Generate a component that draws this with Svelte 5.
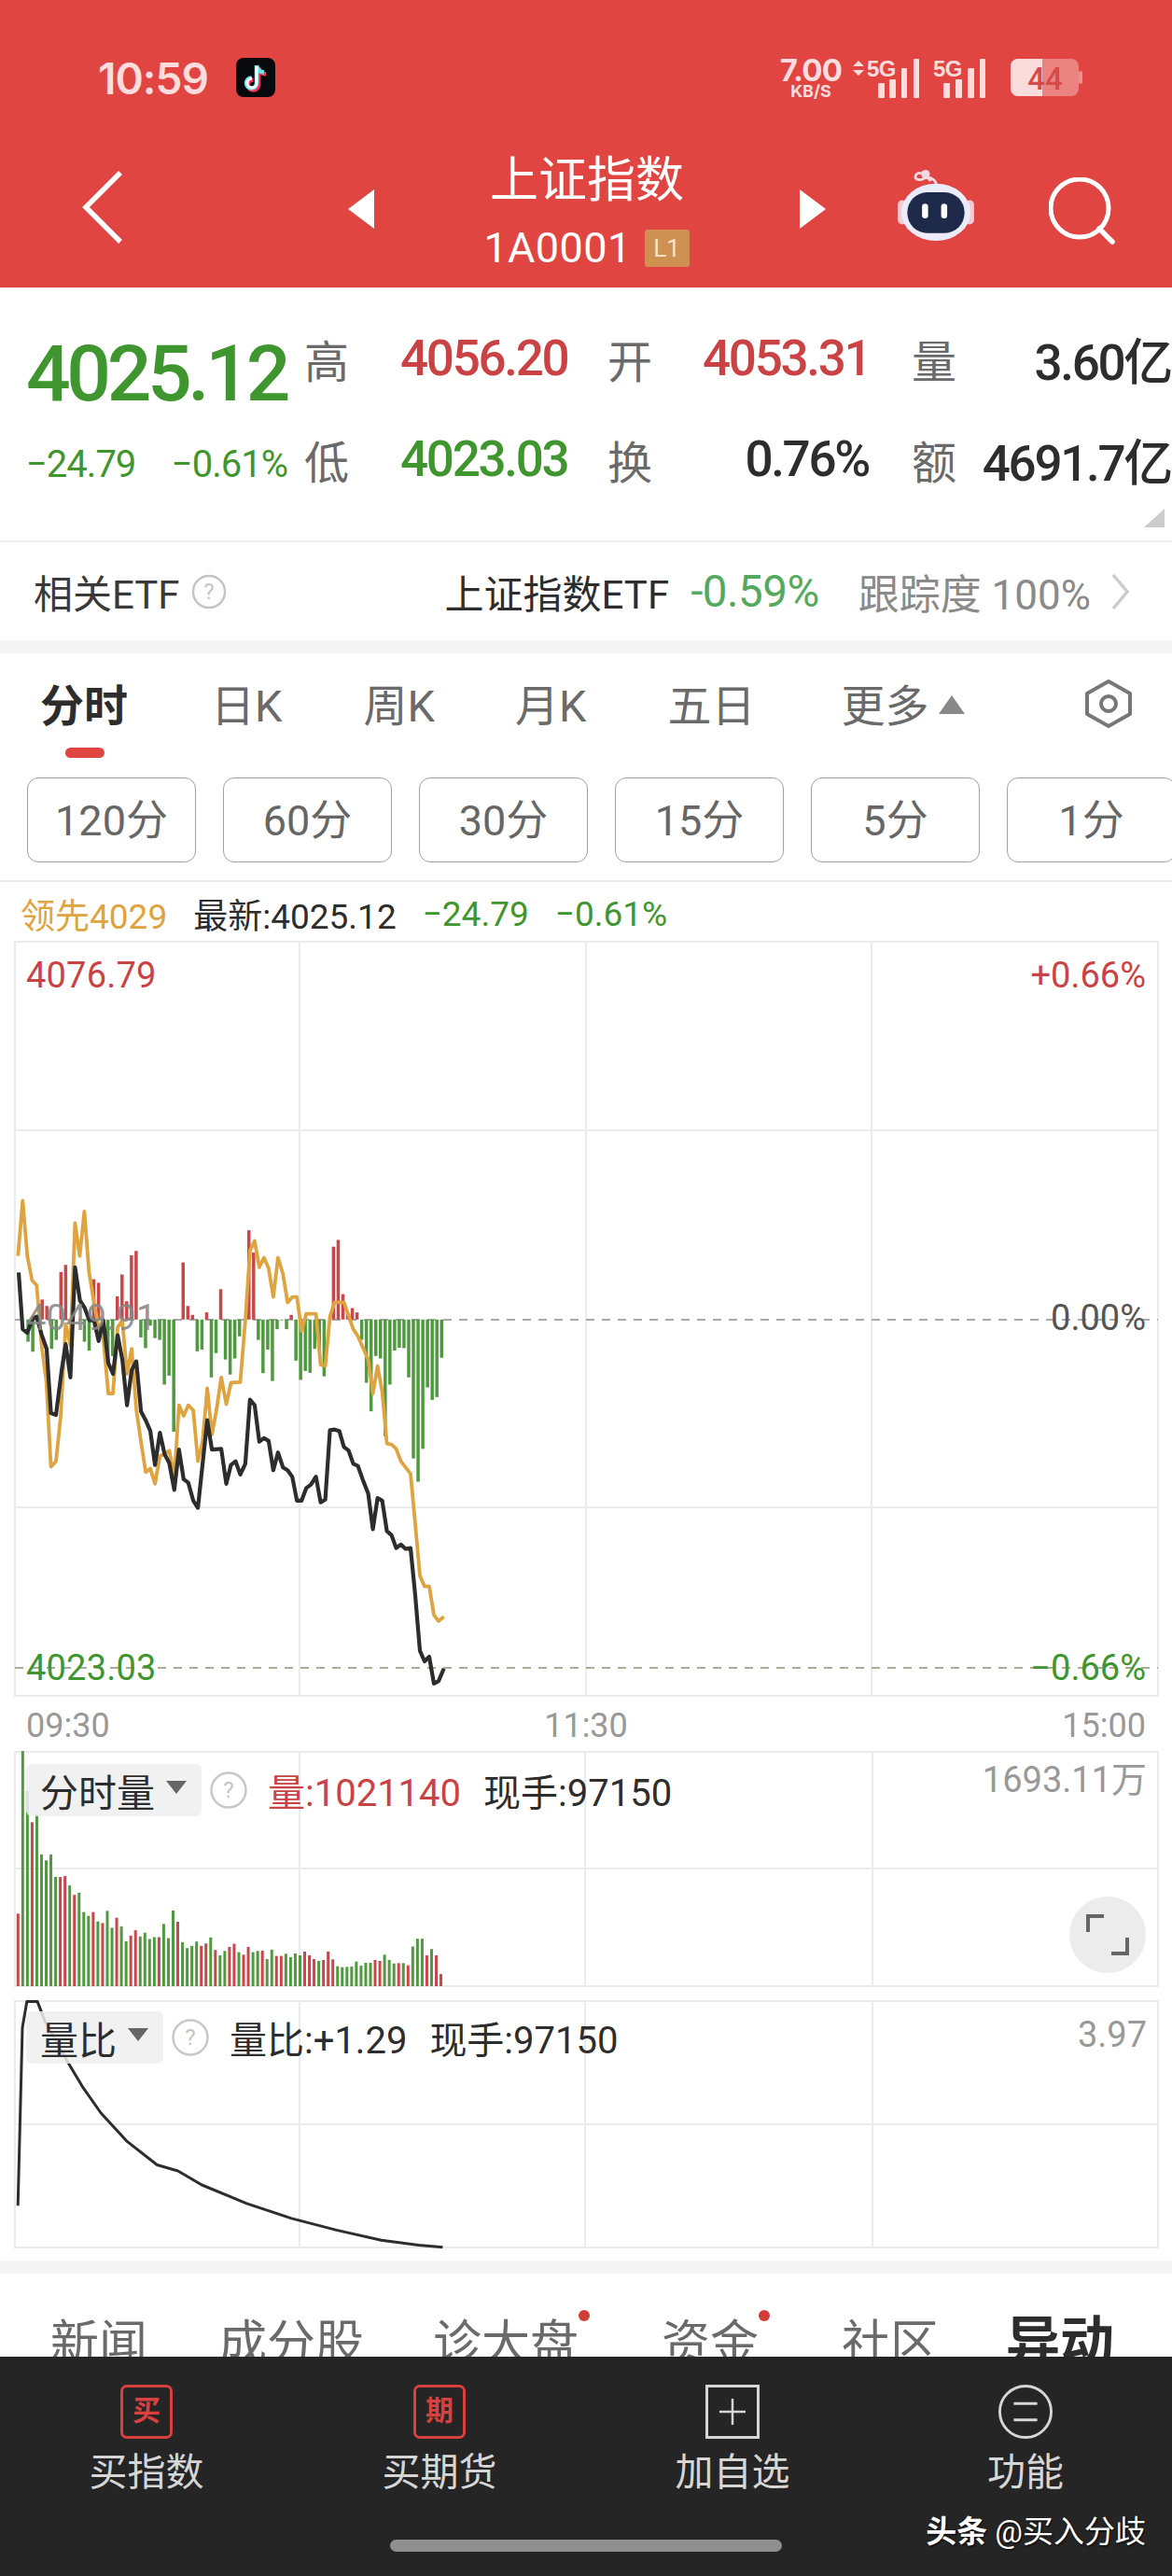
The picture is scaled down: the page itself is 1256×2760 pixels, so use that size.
<script>
  const RED = '#c8474a', GREEN = '#4f9a3f';
  const pts = (a) => { let s = []; for (let i = 0; i < a.length; i += 2) s.push(`${(a[i] / 2.8).toFixed(1)},${(1250 + a[i + 1] / 2.613).toFixed(1)}`); return s.join(' '); };
  const black = pts([56,296,68,455,82,465,98,425,110,420,125,470,140,510,153,690,168,695,185,570,197,497,211,590,225,282,240,375,254,395,268,430,282,430,296,488,310,430,325,550,339,580,353,472,367,540,381,668,395,570,409,545,423,685,437,710,451,740,465,835,480,745,494,805,508,830,523,905,537,792,551,875,565,885,580,935,594,955,622,710,636,792,664,790,679,888,693,835,707,825,721,862,736,832,750,652,764,668,778,770,792,760,806,768,820,850,834,800,849,842,863,850,877,868,891,935,905,935,919,900,933,890,948,868,962,940,976,932,990,738,1004,736,1018,740,1032,785,1046,795,1060,832,1074,838,1088,875,1105,915,1119,1015,1133,928,1147,935,1161,1020,1175,1032,1189,1068,1203,1058,1217,1070,1232,1068,1246,1200,1260,1355,1274,1385,1288,1372,1302,1447,1316,1440,1332,1405]);
  const orange = pts([54,250,68,95,82,250,96,318,110,332,125,500,139,600,153,840,168,825,182,700,197,440,211,500,225,158,239,250,253,125,267,295,282,380,296,450,310,480,325,635,339,635,353,450,367,430,381,580,395,510,409,680,423,770,437,855,451,845,465,888,480,810,494,805,508,795,523,870,537,668,551,698,565,668,580,682,594,825,608,770,622,620,636,750,650,680,664,590,679,665,693,605,721,603,736,430,750,235,764,208,778,282,792,255,806,285,820,365,834,255,849,300,863,380,877,365,891,365,905,460,919,412,948,412,962,555,976,558,990,420,1004,380,1032,380,1060,455,1074,475,1105,540,1119,635,1133,558,1147,630,1161,775,1175,778,1189,790,1203,825,1232,860,1246,1000,1260,1145,1274,1175,1288,1175,1302,1255,1316,1272,1332,1260]);
  const mainTops = [0,0,490,518,0,372,390,510,485,295,275,0,0,0,490,515,315,325,480,550,530,363,302,377,248,236,478,508,445,480,485,610,585,742,0,268,390,415,517,512,408,590,522,343,540,582,537,475,0,178,240,485,578,512,600,455,430,455,415,543,597,572,577,510,515,587,0,224,205,357,410,396,408,485,605,685,530,537,755,610,515,507,508,590,817,882,790,618,653,645,535];
  const mainBars = mainTops.map((t, i) => ({ x: 20 + 5.036 * i - 1.75, t })).filter((b) => b.t).map((b) => {
    const y = 1250 + b.t / 2.613, base = 1250 + 428 / 2.613;
    return { x: b.x, y: Math.min(y, base), h: Math.abs(y - base), c: y < base ? RED : GREEN };
  });
  const vol = '597r 78g 205g 305r 280g 408g 427g 408g 480g 480r 477r 507g 537r 530g 592g 604g 592r 622g 627r 588g 642g 610r 638g 685g 667r 650r 670g 658g 678g 672g 672r 630g 675g 587g 623r 688g 707g 700g 686g 700r 692r 673g 713r 730g 716g 703r 693r 720g 728r 703r 720g 716g 715r 742g 712g 732r 732r 725g 736g 724g 730g 718r 730r 742r 748g 745r 718r 743r 765g 768g 767g 766g 750g 763g 754g 754g 745r 748r 728g 745g 756g 755r 755g 762r 702g 677g 677g 730r 710g 730r 790r'.split(' ');
  const volBars = vol.map((v, i) => {
    const y = 1850 + parseInt(v) / 2.98;
    return { x: 17.8 + 5.036 * i, y, h: 2128 - y, c: v.endsWith('r') ? RED : GREEN };
  });
  const ratio = [[24,1432],[30,900],[36,822],[50,822],[60,880],[90,1000],[110,1075],[135,1155],[170,1240],[210,1310],[238,1328],[270,1370],[330,1425],[390,1470],[450,1505],[510,1535],[560,1550],[592,1556]]
    .map(([x, y]) => `${(x / 1.248).toFixed(1)},${(1850 + y / 2.79).toFixed(1)}`).join(' ');
  const periods = ['120分', '60分', '30分', '15分', '5分', '1分'];
  const actions = [
    { label: '买指数', kind: 'buy', glyph: '买' },
    { label: '买期货', kind: 'buy', glyph: '期' },
    { label: '加自选', kind: 'plus' },
    { label: '功能', kind: 'menu' }
  ];
</script>

<div class="page">
  <header class="head">
    <div class="status">
      <span class="clock">10:59</span>
      <svg class="tt" width="42" height="42" viewBox="0 0 42 42">
        <rect width="42" height="42" rx="8" fill="#08090c"/>
        <path d="M23 9v19a5.500 5.500 0 1 1-5.500-5.500M23 9c.5 4.500 3.500 7 8 7.500" fill="none" stroke="#ff2d55" stroke-width="4.500" transform="translate(1 1)"/>
        <path d="M23 9v19a5.500 5.500 0 1 1-5.500-5.500M23 9c.5 4.500 3.500 7 8 7.500" fill="none" stroke="#5fe6ea" stroke-width="4.500" transform="translate(-1 -1)"/>
        <path d="M22 9v18a5 5 0 1 1-5-5" fill="none" stroke="#fff" stroke-width="3"/>
      </svg>
      <span class="grow"></span>
      <span class="speed"><b>7.00</b><i>KB/S</i></span>
      <svg class="sig" width="80" height="44" viewBox="0 0 80 44">
        <path d="M6 0l6 6H0zM6 16L0 10h12z" fill="#fcdcdc" transform="translate(0 2)"/>
        <text x="15" y="19" class="fiveg">5G</text>
        <rect x="27" y="26" width="7" height="16" rx="1"/><rect x="39" y="22" width="7" height="20" rx="1"/><rect x="52" y="10" width="6" height="32" rx="1"/><rect x="65" y="0" width="6" height="42" rx="1"/>
      </svg>
      <svg class="sig two" width="62" height="44" viewBox="0 0 62 44">
        <text x="0" y="19" class="fiveg">5G</text>
        <rect x="11" y="26" width="7" height="16" rx="1"/><rect x="24" y="22" width="7" height="20" rx="1"/><rect x="37" y="10" width="7" height="32" rx="1"/><rect x="50" y="0" width="6" height="42" rx="1"/>
      </svg>
      <svg class="batt" width="78" height="42" viewBox="0 0 78 42">
        <rect x="0" y="1" width="73" height="40" rx="8" fill="#fbdcdc" fill-opacity=".42"/>
        <path d="M8 1h26v40H8a8 8 0 0 1-8-8V9a8 8 0 0 1 8-8z" fill="#fbdcdc"/>
        <rect x="73" y="14" width="4" height="14" rx="2" fill="#fbdcdc" fill-opacity=".5"/>
        <text x="37" y="34" class="bnum">44</text>
      </svg>
    </div>
    <nav class="bar">
      <svg class="back" width="44" height="78" viewBox="0 0 44 78"><path d="M41 2L4 39l37 37" fill="none" stroke="#fff" stroke-width="5.500"/></svg>
      <svg class="arr-l" width="28" height="42" viewBox="0 0 28 42"><path d="M28 0v42L0 21z" fill="#fff"/></svg>
      <div class="title">
        <div class="name">上证指数</div>
        <div class="code">1A0001<span class="lv">L1</span></div>
      </div>
      <svg class="arr-r" width="28" height="42" viewBox="0 0 28 42"><path d="M0 0v42l28-21z" fill="#fff"/></svg>
      <svg class="bot" width="84" height="78" viewBox="0 0 88 84">
        <path d="M38 14c-6-8-14-12-17-7s4 7 9 4 13 0 15 8" fill="none" stroke="#f4d9e4" stroke-width="3"/>
        <circle cx="32" cy="6" r="5" fill="#f4d9e4"/>
        <rect x="0" y="36" width="10" height="28" rx="5" fill="#f5c9d4"/>
        <rect x="78" y="36" width="10" height="28" rx="5" fill="#f5c9d4"/>
        <ellipse cx="44" cy="50" rx="40" ry="33" fill="#ecebfa"/>
        <rect x="11" y="27" width="66" height="47" rx="23" fill="#1e2a4a"/>
        <rect x="28" y="40" width="7" height="17" rx="3.500" fill="#fff"/>
        <rect x="50" y="40" width="7" height="17" rx="3.500" fill="#fff"/>
      </svg>
      <svg class="search" width="72" height="72" viewBox="0 0 72 72"><circle cx="33" cy="33" r="31" fill="none" stroke="#fff" stroke-width="5"/><path d="M54 55l14 14" stroke="#fff" stroke-width="5.500" stroke-linecap="round"/></svg>
    </nav>
  </header>

  <section class="stats">
    <div class="left">
      <div class="price">4025.12</div>
      <div class="chg"><span>−24.79</span><span>−0.61%</span></div>
    </div>
    <div class="grid">
      <span class="lab">高</span><span class="val red">4056.20</span>
      <span class="lab">开</span><span class="val red second">4053.31</span>
      <span class="lab">量</span><span class="val dark third">3.60亿</span>
      <span class="lab">低</span><span class="val green">4023.03</span>
      <span class="lab">换</span><span class="val dark second">0.76%</span>
      <span class="lab">额</span><span class="val dark third">4691.7亿</span>
    </div>
    <svg class="corner" width="22" height="20" viewBox="0 0 22 20"><path d="M22 0v20H0z" fill="#ccc"/></svg>
  </section>

  <section class="etf">
    <span class="etf-name">相关ETF</span>
    <svg class="q" width="38" height="38" viewBox="0 0 38 38"><circle cx="19" cy="19" r="17" fill="none" stroke="#c4c4c4" stroke-width="2.500"/><text x="19" y="27" class="qm">?</text></svg>
    <span class="grow"></span>
    <span class="etf-t">上证指数ETF</span>
    <span class="etf-p">-0.59%</span>
    <span class="etf-d">跟踪度 100%</span>
    <svg width="22" height="40" viewBox="0 0 22 40"><path d="M3 2l15 18L3 38" fill="none" stroke="#ccc" stroke-width="3.500"/></svg>
  </section>

  <div class="band"></div>

  <section class="tabs">
    <span class="tab on">分时</span>
    <span class="tab t1">日K</span>
    <span class="tab t2">周K</span>
    <span class="tab t3">月K</span>
    <span class="tab t4">五日</span>
    <span class="tab t5">更多</span>
    <svg class="more" width="28" height="20" viewBox="0 0 28 20"><path d="M14 0l14 20H0z" fill="#888"/></svg>
    <span class="grow"></span>
    <svg width="56" height="54" viewBox="0 0 56 54"><path d="M28 3l23 13v22L28 51 5 38V16z" fill="none" stroke="#777" stroke-width="4" stroke-linejoin="round"/><circle cx="28" cy="27" r="8" fill="none" stroke="#777" stroke-width="4"/></svg>
  </section>

  <section class="periods">
    {#each periods as p}<span class="pd">{p}</span>{/each}
  </section>

  <section class="legend">
    <span class="gold">领先4029</span>
    <span class="dark">最新:4025.12</span>
    <span class="green">−24.79</span>
    <span class="green">−0.61%</span>
  </section>

  <section class="chart main">
    <svg class="plot" width="1256" height="810" viewBox="0 1008 1256 810">
      <g class="gl">
        <rect x="16" y="1009" width="1225" height="808"/>
        <path d="M321 1009v808M628 1009v808M934 1009v808M16 1211h1225M16 1615h1225"/>
      </g>
      <path d="M16 1414h1225" stroke="#aaa" stroke-width="2" stroke-dasharray="9 8"/>
      <path d="M16 1787h1225" stroke="#a9ad93" stroke-width="2" stroke-dasharray="9 8"/>
      {#each mainBars as b}<rect x={b.x} y={b.y} width="3.500" height={b.h} fill={b.c}/>{/each}
      <polyline points={orange} fill="none" stroke="#dfa33f" stroke-width="3.800" stroke-linejoin="round"/>
      <polyline points={black} fill="none" stroke="#2d2d2d" stroke-width="4.200" stroke-linejoin="round"/>
    </svg>
    <span class="ov tl red">4076.79</span>
    <span class="ov tr red">+0.66%</span>
    <span class="ov ml">4049.91</span>
    <span class="ov mr">0.00%</span>
    <span class="ov bl green">4023.03</span>
    <span class="ov br green">−0.66%</span>
  </section>

  <section class="times"><span>09:30</span><span>11:30</span><span>15:00</span></section>

  <section class="chart vol">
    <svg class="plot" width="1256" height="255" viewBox="0 1875 1256 255">
      <g class="gl">
        <rect x="16" y="1877" width="1225" height="251"/>
        <path d="M321 1877v251M627 1877v251M935 1877v251M16 2002h1225"/>
      </g>
      {#each volBars as b}<rect x={b.x} y={b.y} width="3" height={b.h} fill={b.c}/>{/each}
    </svg>
    <div class="ind">
      <span class="pill">分时量<i class="tri"></i></span>
      <svg class="q" width="40" height="40" viewBox="0 0 40 40"><circle cx="20" cy="20" r="18.500" fill="none" stroke="#c8c8c8" stroke-width="2.500"/><text x="20" y="28" class="qm">?</text></svg>
      <span class="red">量:1021140</span>
      <span class="dark">现手:97150</span>
    </div>
    <span class="ov right-val">1693.11万</span>
    <span class="ov expand">
      <svg width="46" height="44" viewBox="0 0 46 44"><path d="M19 2H2v17M27 42h17V25" fill="none" stroke="#666" stroke-width="4"/></svg>
    </span>
  </section>

  <section class="chart ratio">
    <svg class="plot" width="1256" height="268" viewBox="0 2142 1256 268">
      <g class="gl">
        <rect x="16" y="2144" width="1225" height="264"/>
        <path d="M321 2144v264M627 2144v264M935 2144v264M16 2276h1225"/>
      </g>
      <polyline points={ratio} fill="none" stroke="#2d2d2d" stroke-width="3" stroke-linejoin="round"/>
    </svg>
    <div class="ind r-ind">
      <span class="pill">量比<i class="tri"></i></span>
      <svg class="q" width="40" height="40" viewBox="0 0 40 40"><circle cx="20" cy="20" r="18.500" fill="none" stroke="#c8c8c8" stroke-width="2.500"/><text x="20" y="28" class="qm">?</text></svg>
      <span>量比:+1.29</span>
      <span class="dark">现手:97150</span>
    </div>
    <span class="ov right-val r2">3.97</span>
  </section>

  <div class="band last"></div>

  <section class="news">
    <span class="n n1">新闻</span>
    <span class="n n2">成分股</span>
    <span class="n n3 dot">诊大盘</span>
    <span class="n n4 dot">资金</span>
    <span class="n n5">社区</span>
    <span class="n n6">异动</span>
  </section>

  <footer class="foot">
    {#each actions as a}
      <div class="act">
        {#if a.kind === 'buy'}
          <span class="ibox">{a.glyph}</span>
        {:else if a.kind === 'plus'}
          <svg width="58" height="58" viewBox="0 0 58 58"><rect x="1.500" y="1.500" width="55" height="55" fill="none" stroke="#d6d6d6" stroke-width="3"/><path d="M29 15v28M15 29h28" stroke="#d6d6d6" stroke-width="2.500"/></svg>
        {:else}
          <svg width="60" height="60" viewBox="0 0 60 60"><circle cx="30" cy="30" r="28.500" fill="none" stroke="#d6d6d6" stroke-width="3"/><path d="M17 21h26M17 39h26" stroke="#d6d6d6" stroke-width="3"/></svg>
        {/if}
        <span class="alabel">{a.label}</span>
      </div>
    {/each}
    <span class="mark"><b>头条</b> @买入分歧</span>
    <span class="home"></span>
  </footer>
</div>

<style>
  :global(body) { margin: 0; background: #fff; }
  .page { width: 1256px; height: 2760px; overflow: hidden; font-family: Roboto, "Noto Sans CJK SC", sans-serif; color: #2d2d2d; background: #fff; }
  .grow { flex: 1; }
  .red { color: #cb4244; }
  .green { color: #3f962f; }
  .dark { color: #2d2d2d; }
  .gold { color: #dfa33f; }

  .head { height: 308px; background: #e04541; }
  .status { height: 130px; box-sizing: border-box; padding: 62px 95px 0 105px; display: flex; align-items: flex-start; color: #fcdcdc; }
  .clock { font-family: Inter, sans-serif; font-weight: 600; font-size: 46px; line-height: 44px; letter-spacing: -1px; width: 148px; }
  .tt { flex: none; }
  .speed { display: flex; flex-direction: column; align-items: center; width: 70px; margin-right: 10px; font-family: Inter, sans-serif; }
  .speed b { font-size: 33px; line-height: 27px; font-weight: 700; letter-spacing: -.8px; }
  .speed i { font-style: normal; font-size: 18px; line-height: 17px; font-weight: 700; }
  .sig rect { fill: #fcdcdc; }
  .fiveg { font: 700 24px "Liberation Sans", sans-serif; fill: #fcdcdc; letter-spacing: -.5px; }
  .sig { margin-top: 1px; }
  .sig.two { margin-left: 6px; margin-right: 21px; }
  .bnum { font: 500 33px Roboto, sans-serif; fill: #d64a4a; text-anchor: middle; }

  .bar { height: 178px; display: flex; align-items: center; padding-bottom: 12px; box-sizing: border-box; }
  .back { margin-left: 88px; margin-top: 17px; }
  .arr-l { margin-left: 241px; margin-top: 22px; }
  .arr-r { margin-top: 22px; }
  .title { width: 456px; display: flex; flex-direction: column; align-items: center; color: #fff; margin-top: 27px; }
  .name { font-size: 52px; line-height: 70px; }
  .code { display: flex; align-items: center; font-size: 45px; line-height: 56px; margin-top: 9px; margin-left: -1px; letter-spacing: .4px; }
  .lv { margin-left: 14px; width: 48px; height: 40px; background: #cf9152; color: #f8e3c8; font-size: 26px; line-height: 40px; text-align: center; border-radius: 3px; letter-spacing: 0; }
  .bot { margin-left: 76px; margin-top: 14px; }
  .search { margin-left: 79px; margin-top: 25px; }

  .stats { position: relative; height: 273px; box-sizing: border-box; border-bottom: 2px solid #eee; padding: 23px 0 0 28px; display: flex; }
  .left { width: 298px; flex: none; }
  .price { font-size: 84px; line-height: 84px; font-weight: 500; color: #3f962f; letter-spacing: -4.400px; margin-top: 28px; }
  .chg { display: flex; justify-content: space-between; width: 280px; margin-top: 30px; font-size: 40px; line-height: 50px; color: #3f962f; letter-spacing: -1px; }
  .grid { display: grid; grid-template-columns: 103px 222px 102px 224px 51px 227px; grid-template-rows: 106px 110px; align-items: center; }
  .lab { font-size: 48px; color: #6a6a6a; }
  .val { font-size: 53px; letter-spacing: -2.300px; font-weight: 500; padding-right: 46px; text-align: right; white-space: nowrap; }
  .val.second { padding-right: 46px; }
  .val.third { padding-right: 0; }
  .corner { position: absolute; right: 8px; bottom: 14px; }

  .etf { height: 105px; display: flex; align-items: center; padding: 0 44px 0 36px; font-size: 42px; box-sizing: border-box; }
  .etf .q { margin-left: 12px; }
  .etf-name { color: #3a3a3a; }
  .etf-t { color: #2d2d2d; }
  .etf-p { color: #55a95f; margin-left: 23px; font-size: 47.500px; letter-spacing: -.5px; }
  .etf-d { color: #8a8a8a; margin-left: 42px; margin-right: 21px; font-size: 44px; }
  .qm { font: 24px Roboto, sans-serif; fill: #c4c4c4; text-anchor: middle; }

  .band { height: 14px; background: #f4f4f4; }
  .band.last { margin-top: 12px; }

  .tabs { height: 120px; box-sizing: border-box; padding: 25px 40px 0 43px; display: flex; align-items: flex-start; font-size: 47px; color: #6a6a6a; }
  .tab { line-height: 64px; position: relative; }
  .tab.on { font-weight: 700; color: #2d2d2d; }
  .tab.on::after { content: ""; position: absolute; left: 27px; top: 76px; width: 42px; height: 11px; border-radius: 6px; background: #e04541; }
  .t1 { margin-left: 89px; }
  .t2 { margin-left: 87px; }
  .t3 { margin-left: 86px; }
  .t4 { margin-left: 87px; }
  .t5 { margin-left: 92px; }
  .more { margin: 20px 0 0 10px; }
  .tabs svg:last-child { margin-top: 2px; }

  .periods { height: 125px; box-sizing: border-box; border-bottom: 2px solid #eee; padding: 13px 0 0 29px; display: flex; gap: 29px; overflow: hidden; }
  .pd { flex: none; box-sizing: border-box; width: 181px; height: 91px; border: 1.500px solid #a0a0a0; border-radius: 12px; color: #666; font-size: 45px; line-height: 91px; text-align: center; }

  .legend { height: 63px; display: flex; align-items: center; padding: 5px 0 0 22px; font-size: 37px; gap: 28px; box-sizing: border-box; }

  .chart { position: relative; }
  .plot { display: block; }
  .gl rect, .gl path { fill: none; stroke: #ebebeb; stroke-width: 2; }
  .ov { position: absolute; white-space: nowrap; font-size: 38px; line-height: 44px; }
  .tl { left: 28px; top: 15px; letter-spacing: .2px; }
  .tr { right: 28px; top: 15px; }
  .ml { left: 28px; top: 382px; color: rgba(135,135,135,.9); letter-spacing: .2px; }
  .mr { right: 28px; top: 382px; color: #555; }
  .bl { left: 28px; top: 757px; letter-spacing: .2px; }
  .br { right: 28px; top: 757px; }

  .times { height: 57px; box-sizing: border-box; padding: 4px 28px 0; display: flex; justify-content: space-between; align-items: center; font-size: 36px; color: #999; }

  .ind { position: absolute; left: 28px; top: 14px; display: flex; align-items: center; font-size: 40px; white-space: nowrap; }
  .r-ind { top: 12px; }
  .pill { display: flex; align-items: center; height: 56px; padding: 0 16px 0 15px; background: rgba(238,238,238,.85); border-radius: 6px; color: #2d2d2d; font-size: 41px; }
  .tri { display: block; width: 0; height: 0; margin: -6px 0 0 12px; border: 11px solid transparent; border-top: 14px solid #666; border-bottom: 0; }
  .ind .q { margin: 0 22px 0 9px; }
  .ind .dark { margin-left: 24px; }
  .right-val { right: 27px; top: 10px; color: #999; font-size: 38px; }
  .expand { right: 28px; top: 157px; width: 82px; height: 82px; border-radius: 50%; background: #ececec; display: flex; align-items: center; justify-content: center; }

  .ratio { margin-top: 12px; }
  .r2 { top: 16px; }

  .news { height: 89px; overflow: hidden; font-size: 52px; color: #6a6a6a; display: flex; padding: 41px 0 0 54px; box-sizing: border-box; line-height: 70px; }
  .n { flex: none; position: relative; }
  .n2 { margin-left: 76px; }
  .n3 { margin-left: 74px; }
  .n4 { margin-left: 89px; }
  .n5 { margin-left: 89px; }
  .n6 { margin-left: 72px; font-size: 58px; font-weight: 700; color: #2d2d2d; margin-top: -3px; }
  .dot::after { content: ""; position: absolute; right: -12px; top: -2px; width: 12px; height: 12px; border-radius: 50%; background: #d23b36; }

  .foot { position: relative; height: 235px; background: #252525; display: grid; grid-template-columns: repeat(4, 314px); align-content: start; padding-top: 30px; box-sizing: border-box; }
  .act { display: flex; flex-direction: column; align-items: center; color: #d6d6d6; }
  .act > svg, .ibox { height: 58px; }
  .ibox { box-sizing: border-box; width: 56px; border: 3px solid #d9413f; border-radius: 7px; color: #d9413f; font-size: 30px; line-height: 50px; text-align: center; font-weight: 700; }
  .alabel { font-size: 41px; line-height: 56px; margin-top: 8px; }
  .mark { position: absolute; right: 28px; top: 168px; font-size: 33px; line-height: 40px; color: #fff; text-shadow: 1px 1px 2px #000; white-space: nowrap; }
  .home { position: absolute; left: 418px; top: 196px; width: 420px; height: 13px; border-radius: 7px; background: #8f8f8f; }
</style>
